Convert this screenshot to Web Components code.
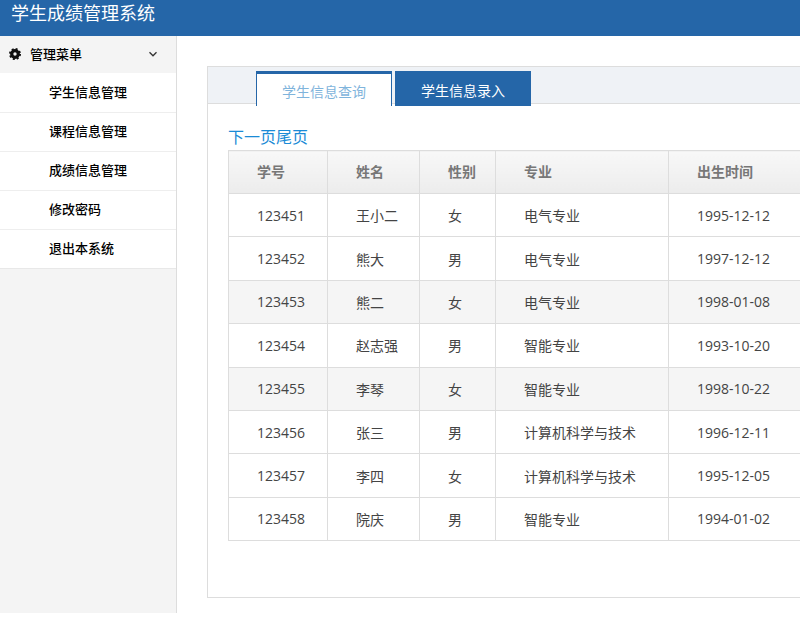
<!DOCTYPE html>
<html lang="zh">
<head>
<meta charset="utf-8">
<title>学生成绩管理系统</title>
<style>
  html, body { margin: 0; height: 100%; overflow: hidden; background: #fff; }
  body { font-family: "Open Sans", "Noto Sans CJK SC", sans-serif; font-size: 14px; color: #333; }
  #app { display: flex; flex-direction: column; width: 800px; height: 630px; overflow: hidden; }
  #body { display: flex; align-items: flex-start; }
</style>
</head>
<body>
<div id="app">
  <app-header>学生成绩管理系统</app-header>
  <div id="body">
    <side-menu title="管理菜单">
      <menu-item>学生信息管理</menu-item>
      <menu-item>课程信息管理</menu-item>
      <menu-item>成绩信息管理</menu-item>
      <menu-item>修改密码</menu-item>
      <menu-item>退出本系统</menu-item>
    </side-menu>
    <tab-panel>
      <tab-button slot="tabs" active>学生信息查询</tab-button>
      <tab-button slot="tabs">学生信息录入</tab-button>
      <student-table></student-table>
    </tab-panel>
  </div>
</div>

<script>
class AppHeader extends HTMLElement {
  constructor() {
    super();
    this.attachShadow({ mode: "open" }).innerHTML = `
      <style>
        :host { display: block; height: 36px; background: #2566a8; color: #fff; flex: none; }
        div { padding-left: 11px; font-size: 18px; line-height: 26px; }
      </style>
      <div><slot></slot></div>`;
  }
}

class SideMenu extends HTMLElement {
  constructor() {
    super();
    this.attachShadow({ mode: "open" }).innerHTML = `
      <style>
        :host { display: block; width: 176px; height: 577px; flex: none; background: #f4f4f4; border-right: 1px solid #ddd; }
        .head { display: flex; align-items: center; height: 37px; padding: 0 18px 2px 9px; box-sizing: border-box; color: #000; font-weight: 500; font-size: 13px; }
        .head span { flex: 1; margin-left: 9px; }
        .list { background: #fff; padding-top: 1px; border-bottom: 1px solid #e8e8e8; }
        svg { display: block; }
      </style>
      <div class="head">
        <svg width="12" height="12" viewBox="0 0 12 12">
          <circle cx="6" cy="6" r="3.3" fill="none" stroke="#111" stroke-width="3.2"/>
          <circle cx="6" cy="6" r="5" fill="none" stroke="#111" stroke-width="2" stroke-dasharray="1.96 1.97"/>
        </svg>
        <span></span>
        <svg width="10" height="10" viewBox="0 0 10 10">
          <path d="M1.5 3.2 5 6.8 8.500 3.200" fill="none" stroke="#333" stroke-width="1.300"/>
        </svg>
      </div>
      <div class="list"><slot></slot></div>`;
    this.shadowRoot.querySelector("span").textContent = this.getAttribute("title");
  }
}

class MenuItem extends HTMLElement {
  constructor() {
    super();
    this.attachShadow({ mode: "open" }).innerHTML = `
      <style>
        :host { display: block; height: 38px; line-height: 36px; padding-left: 49px; color: #000; font-size: 13px; font-weight: 500; border-bottom: 1px solid #eee; box-sizing: content-box; }
        :host(:last-child) { border-bottom: 0; }
      </style>
      <slot></slot>`;
  }
}

class TabButton extends HTMLElement {
  constructor() {
    super();
    this.attachShadow({ mode: "open" }).innerHTML = `
      <style>
        :host { display: block; width: 136px; height: 35px; line-height: 39px; box-sizing: border-box; text-align: center; font-size: 14px; background: #2566a8; color: #fff; }
        :host([active]) { background: #fff; color: #7fb4dc; border: 1px solid #2566a8; border-top-width: 3px; border-bottom: 0; line-height: 35px; }
      </style>
      <slot></slot>`;
  }
}

class TabPanel extends HTMLElement {
  constructor() {
    super();
    this.attachShadow({ mode: "open" }).innerHTML = `
      <style>
        :host { display: block; flex: none; width: 640px; height: 532px; margin: 30px 0 0 30px; box-sizing: border-box; border: 1px solid #ddd; background: #fff; }
        .bar { display: flex; gap: 3px; height: 37px; padding: 4px 0 0 48px; box-sizing: border-box; background: #eff2f6; border-bottom: 1px solid #ddd; }
        .content { padding: 21px 20px 0; }
      </style>
      <div class="bar"><slot name="tabs"></slot></div>
      <div class="content"><slot></slot></div>`;
  }
}

const students = [
  ["123451", "王小二", "女", "电气专业", "1995-12-12"],
  ["123452", "熊大", "男", "电气专业", "1997-12-12"],
  ["123453", "熊二", "女", "电气专业", "1998-01-08"],
  ["123454", "赵志强", "男", "智能专业", "1993-10-20"],
  ["123455", "李琴", "女", "智能专业", "1998-10-22"],
  ["123456", "张三", "男", "计算机科学与技术", "1996-12-11"],
  ["123457", "李四", "女", "计算机科学与技术", "1995-12-05"],
  ["123458", "院庆", "男", "智能专业", "1994-01-02"],
];

class StudentTable extends HTMLElement {
  constructor() {
    super();
    const rows = students
      .map((s) => `<tr>${s.map((v) => `<td>${v}</td>`).join("")}</tr>`)
      .join("");
    this.attachShadow({ mode: "open" }).innerHTML = `
      <style>
        :host { display: block; }
        .pager { font-size: 16px; line-height: 24px; height: 25px; color: #1b8bd6; }
        .pager a { color: inherit; text-decoration: none; }
        table { border-collapse: collapse; table-layout: fixed; width: 640px; }
        th, td { border: 1px solid #ddd; padding: 0 0 0 28px; text-align: left; font-size: 14px; }
        th { height: 43px; padding-bottom: 2px; box-sizing: border-box; font-size: 14px; font-weight: 700; color: #777; background: linear-gradient(#f8f8f8, #ececec); }
        td { height: 42.400px; color: #444; }
        tr:nth-child(odd) td { background: #fff; }
        tr:nth-child(3) td, tr:nth-child(5) td { background: #f5f5f5; }
      </style>
      <div class="pager"><a href="#">下一页</a><a href="#">尾页</a></div>
      <table>
        <colgroup><col style="width:99px"><col style="width:92px"><col style="width:76px"><col style="width:173px"><col style="width:200px"></colgroup>
        <thead><tr><th>学号</th><th>姓名</th><th>性别</th><th>专业</th><th>出生时间</th></tr></thead>
        <tbody>${rows}</tbody>
      </table>`;
  }
}

customElements.define("app-header", AppHeader);
customElements.define("side-menu", SideMenu);
customElements.define("menu-item", MenuItem);
customElements.define("tab-button", TabButton);
customElements.define("tab-panel", TabPanel);
customElements.define("student-table", StudentTable);
</script>
</body>
</html>
